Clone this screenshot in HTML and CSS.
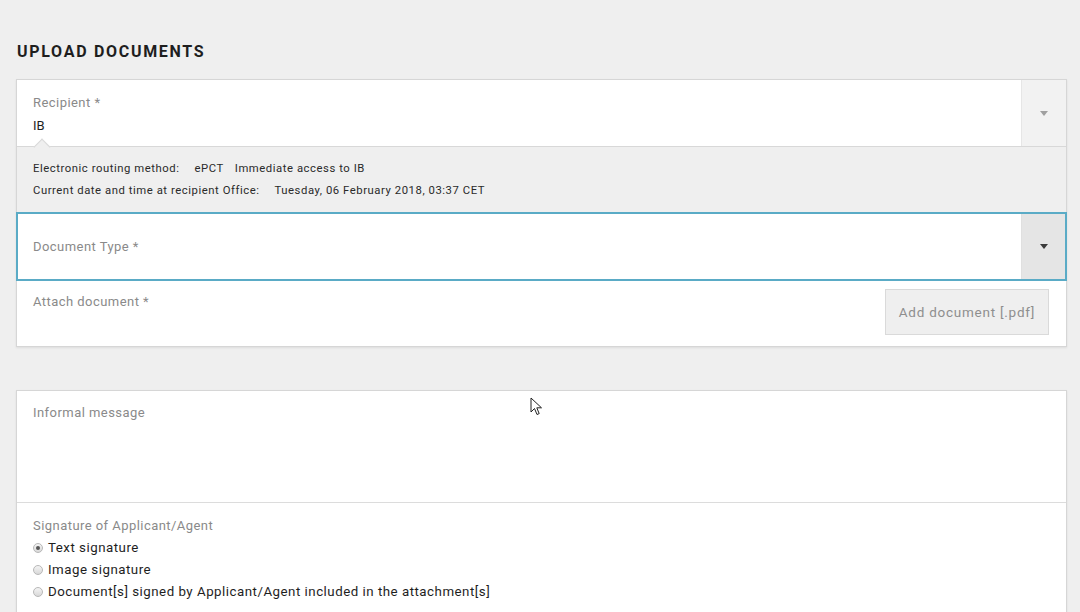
FILE: index.html
```html
<!DOCTYPE html>
<html>
<head>
<meta charset="utf-8">
<link rel="stylesheet" href="styles.css">
</head>
<body>
<div class="page">
  <h1 class="title">UPLOAD DOCUMENTS</h1>
  <div class="card">
    <div class="row select-row">
      <div class="field">
        <div class="label">Recipient *</div>
        <div class="value">IB</div>
      </div>
      <div class="caret-cell"><span class="tri light"></span></div>
      <span class="notch"></span>
    </div>
    <div class="info">
      <div class="info-line"><span class="k">Electronic routing method:</span><span class="v">ePCT</span><span class="v2">Immediate access to IB</span></div>
      <div class="info-line"><span class="k">Current date and time at recipient Office:</span><span class="v">Tuesday, 06 February 2018, 03:37 CET</span></div>
    </div>
    <div class="row select-row focus">
      <div class="field mid">
        <div class="label">Document Type *</div>
      </div>
      <div class="caret-cell dark"><span class="tri"></span></div>
    </div>
    <div class="row attach-row">
      <div class="field">
        <div class="label">Attach document *</div>
      </div>
      <button class="btn">Add document [.pdf]</button>
    </div>
  </div>

  <div class="card card2">
    <div class="message">
      <div class="label">Informal message</div>
    </div>
    <div class="signature">
      <div class="label">Signature of Applicant/Agent</div>
      <label class="radio"><span class="dot checked"></span>Text signature</label>
      <label class="radio"><span class="dot"></span>Image signature</label>
      <label class="radio"><span class="dot"></span>Document[s] signed by Applicant/Agent included in the attachment[s]</label>
    </div>
  </div>
</div>
<svg class="cursor" width="14" height="20" viewBox="0 0 14 20"><path d="M1 1 L1 15 L4.5 11.5 L7 17.5 L9.2 16.6 L6.8 10.8 L11.5 10.8 Z" fill="#fff" stroke="#222" stroke-width="1" stroke-linejoin="round"/></svg>
</body>
</html>
```
FILE: styles.css
```css
* { box-sizing: border-box; }
html, body { margin: 0; padding: 0; }
body {
  background: #efefef;
  font-family: Roboto, "Liberation Sans", sans-serif;
  color: #222;
  width: 1080px;
  height: 612px;
  overflow: hidden;
  position: relative;
}
.page { padding: 43px 13px 0 16px; }
.title {
  margin: 0 0 19px 1px;
  font-size: 16px;
  font-weight: 700;
  letter-spacing: 1.7px;
  line-height: 17px;
  color: #1e1e1e;
}
.card {
  background: #fff;
  border: 1px solid #d6d6d6;
  box-shadow: 0 1px 2px rgba(0,0,0,0.08);
}
.row { display: flex; position: relative; }
.select-row { height: 67px; border-bottom: 1px solid #d8d8d8; }
.field { flex: 1; padding: 15px 16px 0 16px; }
.label { font-size: 13px; color: #8a8a8a; line-height: 16px; letter-spacing: 0.45px; }
.value { font-size: 13px; color: #1e1e1e; line-height: 16px; margin-top: 7px; }
.caret-cell {
  width: 45px;
  background: #f2f2f2;
  border-left: 1px solid #e6e6e6;
  display: flex; align-items: center; justify-content: center;
}
.tri {
  width: 0; height: 0;
  border-left: 4.5px solid transparent;
  border-right: 4.5px solid transparent;
  border-top: 5px solid #3a3a3a;
}
.tri.light { border-top-color: #a0a0a0; }
.notch {
  position: absolute;
  left: 19px; bottom: -7px;
  width: 12px; height: 12px;
  background: #efefef;
  border-left: 1px solid #d8d8d8;
  border-top: 1px solid #d8d8d8;
  transform: rotate(45deg);
}
.info {
  background: #efefef;
  padding: 11px 16px 10px 16px;
  font-size: 11.3px;
  letter-spacing: 0.55px;
  color: #2a2a2a;
  line-height: 22px;
}
.info .k { margin-right: 15px; }
.info .v { margin-right: 11px; }
.focus {
  height: 69px;
  border: 2px solid #5aabc6;
  margin: 0 -1px;
}
.field.mid { display: flex; align-items: center; padding: 0 15px; padding-top: 0; }
.caret-cell.dark { background: #e5e5e5; border-left: 1px solid #e0e0e0; width: 44px; }
.attach-row { height: 65px; align-items: flex-start; }
.attach-row .field { padding-top: 13px; }
.btn {
  margin: 8px 17px 0 0;
  width: 164px;
  height: 46px;
  background: #efefef;
  border: 1px solid #dadada;
  font-family: Roboto, "Liberation Sans", sans-serif;
  font-size: 13.5px;
  letter-spacing: 0.75px;
  color: #8e8e8e;
  padding: 0;
}
.card2 { margin-top: 43px; }
.message { height: 112px; border-bottom: 1px solid #dcdcdc; padding: 14px 16px; }
.signature { padding: 15px 16px 30px 16px; }
.signature .label { line-height: 16px; margin-bottom: 3px; }
.radio {
  display: flex; align-items: center;
  font-size: 13.3px; color: #1e1e1e;
  letter-spacing: 0.5px;
  line-height: 22px;
}
.dot {
  width: 10px; height: 10px;
  border-radius: 50%;
  border: 1px solid #b8b8b8;
  background: linear-gradient(#f4f4f4, #d8d8d8);
  margin-right: 5px;
  position: relative;
}
.dot.checked::after {
  content: "";
  position: absolute;
  left: 2px; top: 2px;
  width: 4px; height: 4px;
  border-radius: 50%;
  background: #555;
}
.cursor { position: absolute; left: 530px; top: 397px; }
```
